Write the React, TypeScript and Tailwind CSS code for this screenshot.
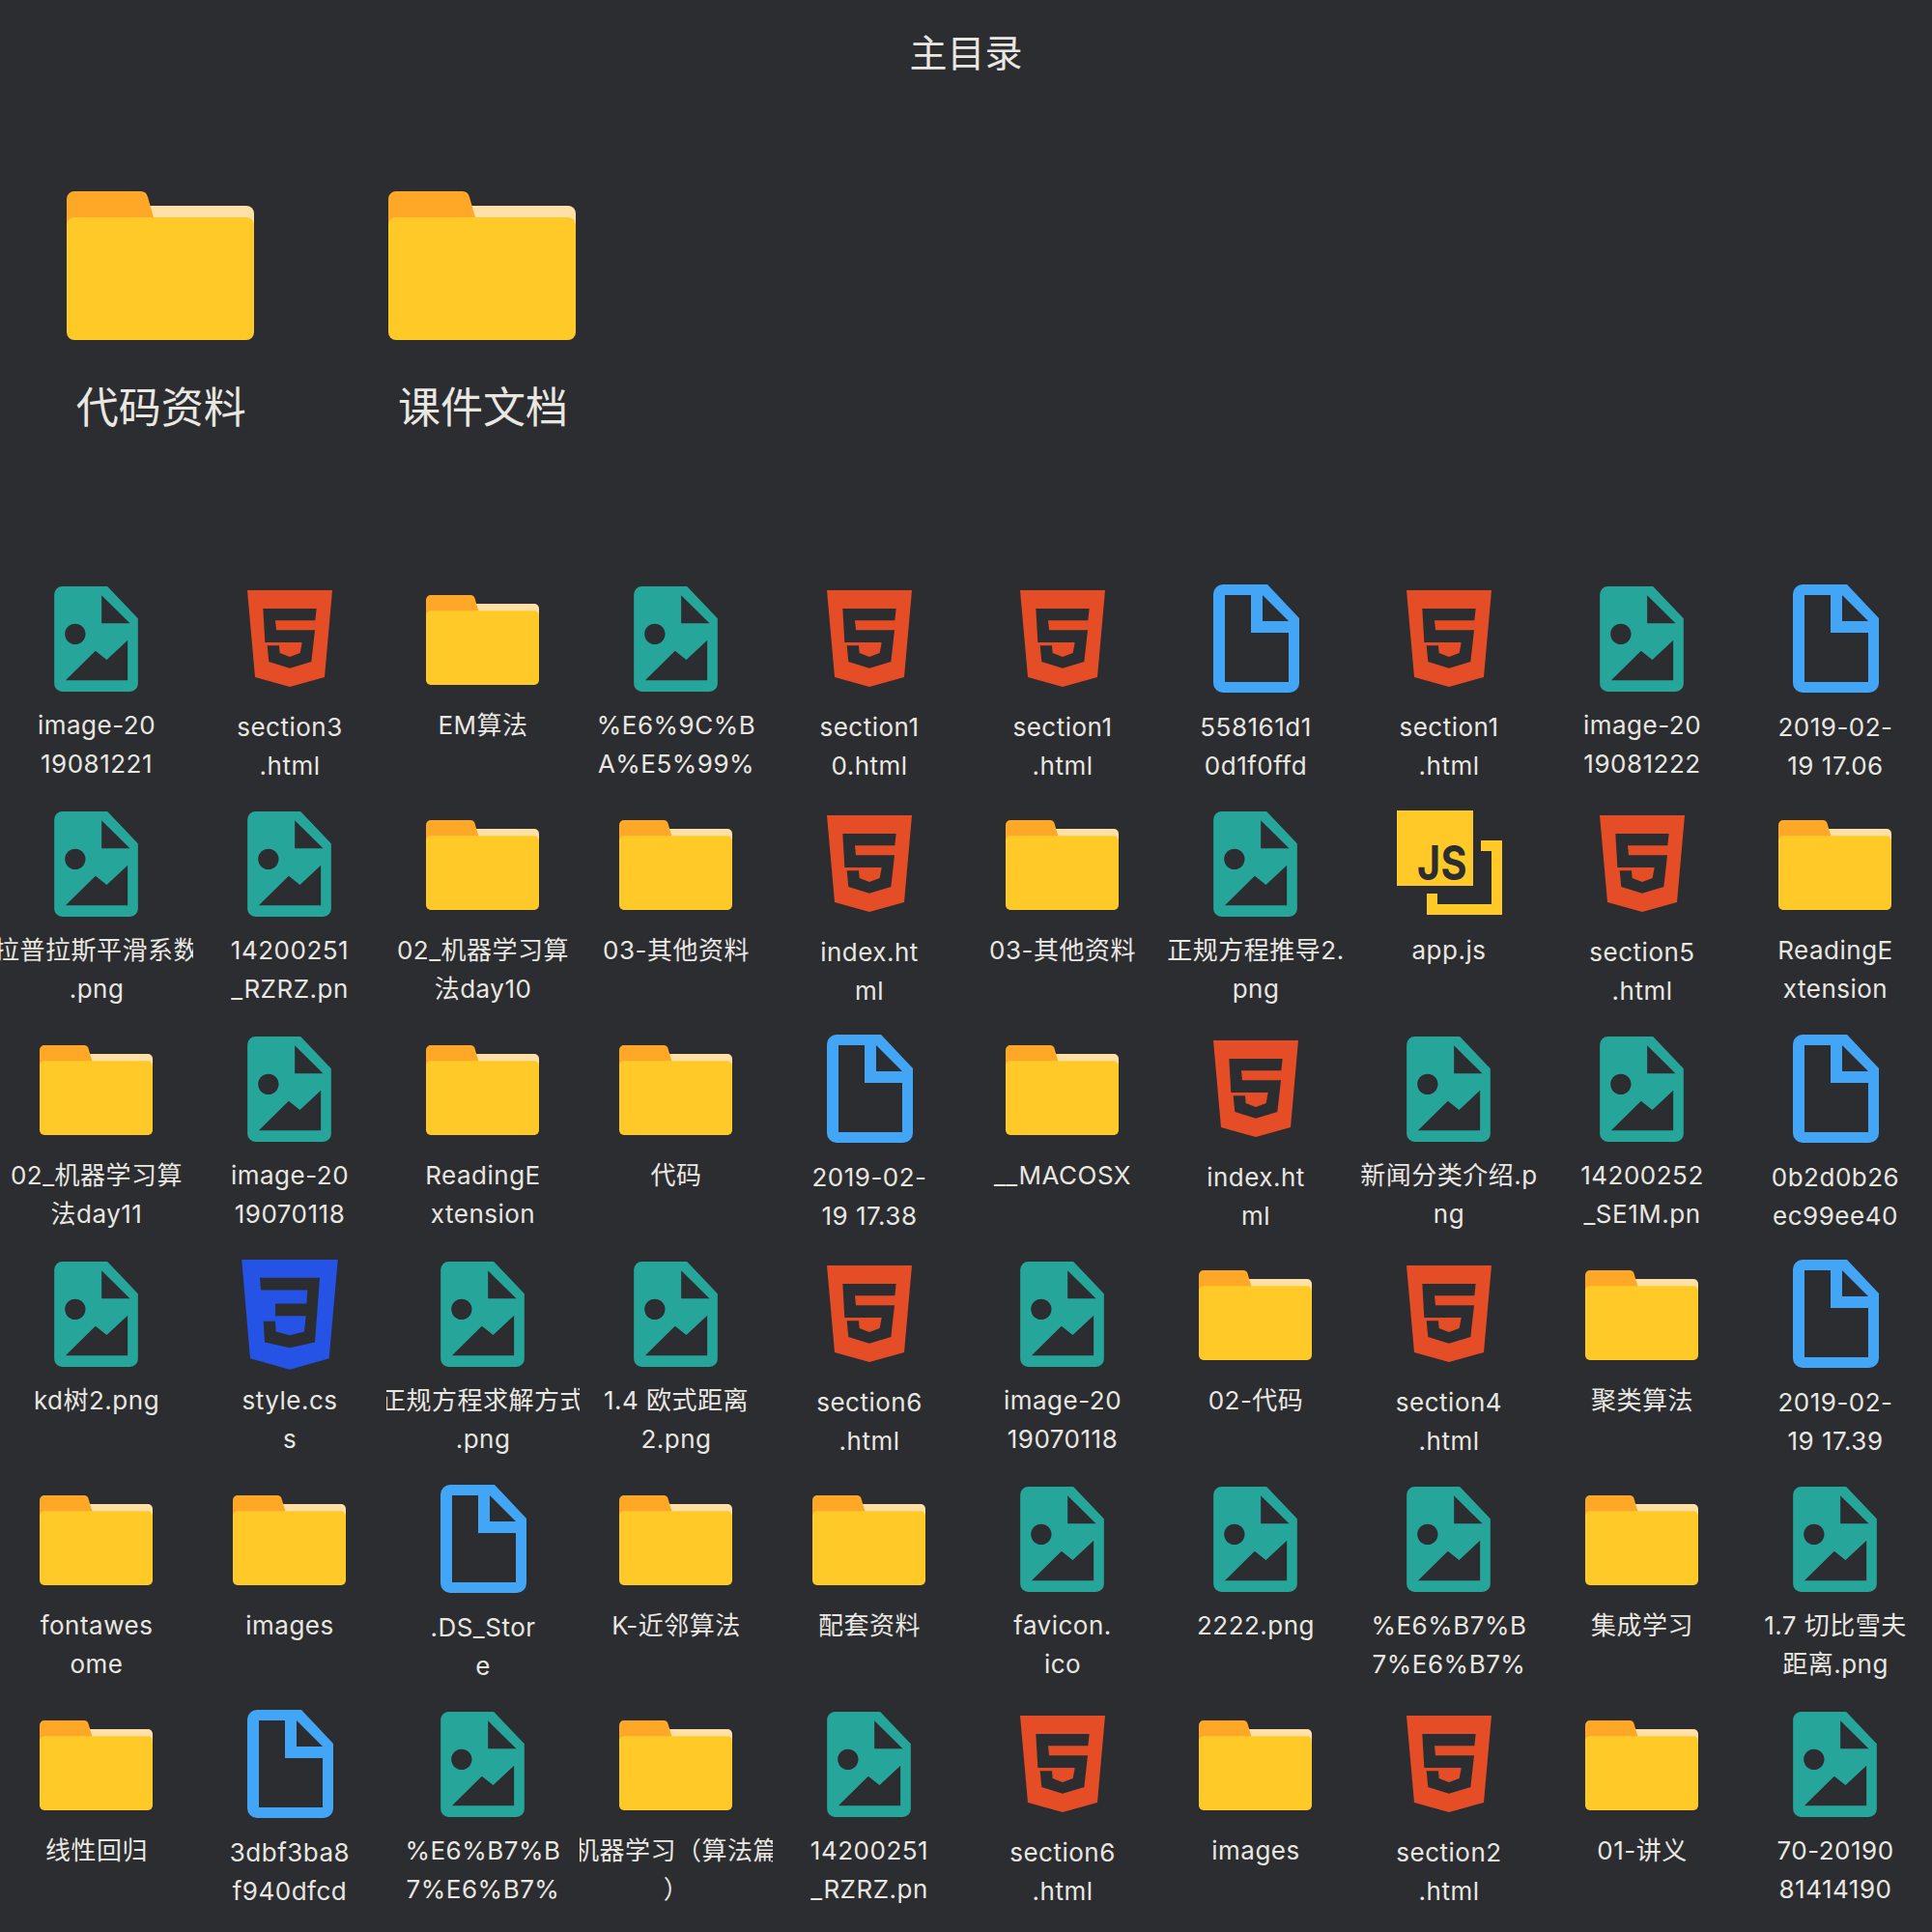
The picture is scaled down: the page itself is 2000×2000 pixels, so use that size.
const FONT = "font-['Inter','Noto_Sans_CJK_SC',sans-serif]";

type Kind = "img" | "html" | "css" | "js" | "doc" | "dir";

const ImageIcon = () => (
  <svg width="87" height="109" viewBox="0 0 260 327">
    <path
      fillRule="evenodd"
      fill="#26a69a"
      d="M25 0H165L260 100V302A25 25 0 0 1 235 327H25A25 25 0 0 1 0 302V25A25 25 0 0 1 25 0ZM147 28V115H235ZM65 116A32 32 0 1 0 65 180A32 32 0 1 0 65 116ZM35 292H228V167L163 228L128 200Z"
    />
  </svg>
);

const HtmlIcon = () => (
  <svg width="88" height="100" viewBox="0 0 264 300">
    <path
      fillRule="evenodd"
      fill="#e44d26"
      d="M0 0H264L240 270L132 300L24 270ZM49 57L55 162H170L164 195L132 207L101 195L99 172H62L67 222L132 242L199 222L210 124H90L87 94H211L215 57Z"
    />
  </svg>
);

const CssIcon = () => (
  <svg width="100" height="117" viewBox="0 0 300 350">
    <path
      fillRule="evenodd"
      fill="#2553e6"
      d="M0 0H300L272 315L150 350L27 315ZM57 65L60 103H205L202 145H105V183H200L195 232L150 243L107 232L105 200H68L72 265L150 282L228 265L243 65Z"
    />
  </svg>
);

const DocIcon = () => (
  <svg width="89" height="112" viewBox="0 0 89 112">
    <path
      fillRule="evenodd"
      fill="#42a5f5"
      d="M10 0H56L89 35V102A10 10 0 0 1 79 112H10A10 10 0 0 1 0 102V10A10 10 0 0 1 10 0ZM12 11V101H78V50H39V11ZM51 11V38H78Z"
    />
  </svg>
);

const JsIcon = () => (
  <svg width="109" height="108" viewBox="0 0 109 108">
    <path fill="#ffca28" d="M0 0H79V78H0ZM87 31H109V108H31V86H42V97H98V42H87Z" />
    <text x="21" y="72" textLength="52" lengthAdjust="spacingAndGlyphs" fontFamily="Inter" fontWeight="700" fontSize="49" fill="#2c2d31">
      JS
    </text>
  </svg>
);

const Folder = ({ w, h }: { w: number; h: number }) => (
  <svg width={w} height={h} viewBox="0 0 194 154">
    <path fill="#ffe0a6" d="M60 15H186A8 8 0 0 1 194 23V60H60Z" />
    <path fill="#ffa726" d="M8 0H76A8 8 0 0 1 84 6L90 27V50H0V8A8 8 0 0 1 8 0Z" />
    <path fill="#ffca28" d="M8 27H186A8 8 0 0 1 194 35V146A8 8 0 0 1 186 154H8A8 8 0 0 1 0 146V35A8 8 0 0 1 8 27Z" />
  </svg>
);

const items: [Kind, string, string?][] = [
  ["img", "image-20", "19081221"], ["html", "section3", ".html"], ["dir", "EM算法"], ["img", "%E6%9C%B", "A%E5%99%"], ["html", "section1", "0.html"],
  ["html", "section1", ".html"], ["doc", "558161d1", "0d1f0ffd"], ["html", "section1", ".html"], ["img", "image-20", "19081222"], ["doc", "2019-02-", "19 17.06"],
  ["img", "拉普拉斯平滑系数", ".png"], ["img", "14200251", "_RZRZ.pn"], ["dir", "02_机器学习算", "法day10"], ["dir", "03-其他资料"], ["html", "index.ht", "ml"],
  ["dir", "03-其他资料"], ["img", "正规方程推导2.", "png"], ["js", "app.js"], ["html", "section5", ".html"], ["dir", "ReadingE", "xtension"],
  ["dir", "02_机器学习算", "法day11"], ["img", "image-20", "19070118"], ["dir", "ReadingE", "xtension"], ["dir", "代码"], ["doc", "2019-02-", "19 17.38"],
  ["dir", "__MACOSX"], ["html", "index.ht", "ml"], ["img", "新闻分类介绍.p", "ng"], ["img", "14200252", "_SE1M.pn"], ["doc", "0b2d0b26", "ec99ee40"],
  ["img", "kd树2.png"], ["css", "style.cs", "s"], ["img", "正规方程求解方式", ".png"], ["img", "1.4 欧式距离", "2.png"], ["html", "section6", ".html"],
  ["img", "image-20", "19070118"], ["dir", "02-代码"], ["html", "section4", ".html"], ["dir", "聚类算法"], ["doc", "2019-02-", "19 17.39"],
  ["dir", "fontawes", "ome"], ["dir", "images"], ["doc", ".DS_Stor", "e"], ["dir", "K-近邻算法"], ["dir", "配套资料"],
  ["img", "favicon.", "ico"], ["img", "2222.png"], ["img", "%E6%B7%B", "7%E6%B7%"], ["dir", "集成学习"], ["img", "1.7 切比雪夫", "距离.png"],
  ["dir", "线性回归"], ["doc", "3dbf3ba8", "f940dfcd"], ["img", "%E6%B7%B", "7%E6%B7%"], ["dir", "机器学习（算法篇", "）"], ["img", "14200251", "_RZRZ.pn"],
  ["html", "section6", ".html"], ["dir", "images"], ["html", "section2", ".html"], ["dir", "01-讲义"], ["img", "70-20190", "81414190"],
];

const Icon = ({ kind }: { kind: Kind }) => {
  if (kind === "img") return <div className="h-[126px] pt-[2px] mr-[2px]"><ImageIcon /></div>;
  if (kind === "html") return <div className="h-[128px] pt-[6px]"><HtmlIcon /></div>;
  if (kind === "css") return <div className="h-[129px] -mt-[3px]"><CssIcon /></div>;
  if (kind === "js") return <div className="h-[126px] pt-[1px]"><JsIcon /></div>;
  if (kind === "doc") return <div className="h-[128px]"><DocIcon /></div>;
  return <div className="h-[126px] pt-[11px] mr-[2px]"><Folder w={117} h={93} /></div>;
};

export default function App() {
  return (
    <div className={`w-[2000px] h-[2000px] overflow-hidden bg-[#2c2d31] text-[#e8e7e1] ${FONT}`}>
      <h1 className="h-[198px] pt-[30px] text-center text-[39px] leading-[50px] font-normal">主目录</h1>
      <div className="grid grid-cols-6 h-[407px]">
        {["代码资料", "课件文档"].map((name) => (
          <div key={name} className="flex flex-col items-center">
            <div className="mr-[2px]">
              <Folder w={194} h={154} />
            </div>
            <div className="mt-[40px] text-[44px] leading-[60px]">{name}</div>
          </div>
        ))}
      </div>
      <div className="grid grid-cols-10 auto-rows-[233px]">
        {items.map(([kind, a, b], i) => (
          <div key={i} className="flex flex-col items-center overflow-hidden text-[26px] leading-[40px] tracking-[0.5px] text-center">
            <Icon kind={kind} />
            <div className="whitespace-nowrap">{a}</div>
            {b && <div className="whitespace-nowrap">{b}</div>}
          </div>
        ))}
      </div>
    </div>
  );
}
